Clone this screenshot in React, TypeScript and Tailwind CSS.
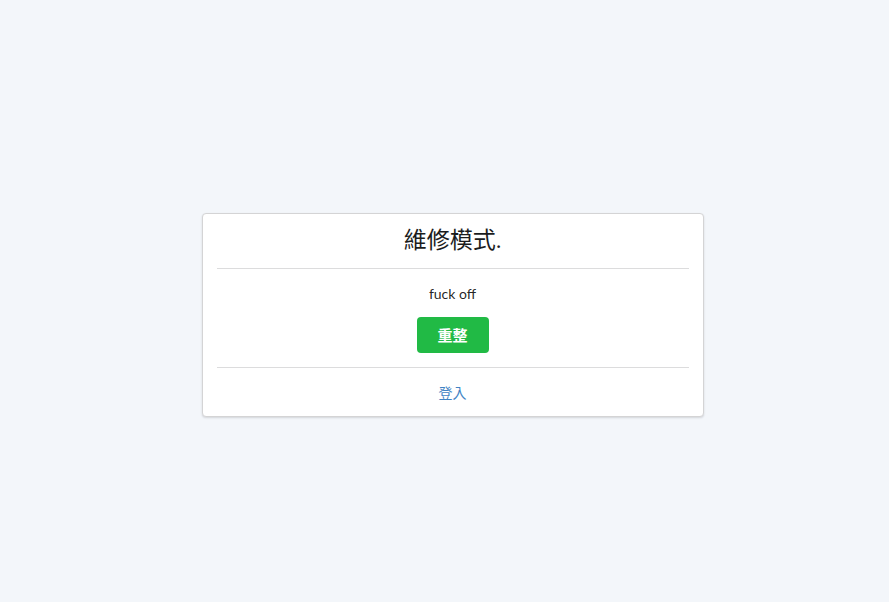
export default function App() {
  return (
    <div className="min-h-screen w-full bg-[#f3f6fa] flex items-center justify-center pl-[16px] pt-[28px] font-['Lato','Noto_Sans_CJK_TC',sans-serif] text-[14px] text-[rgba(0,0,0,0.87)]">
      <div className="w-[502px] bg-white border border-[#d4d4d5] rounded-[4px] shadow-[0_1px_2px_rgba(34,36,38,0.15)] px-[14px] pt-[12px] pb-[13px] flex flex-col items-center">
        <h1 className="h-[30px] leading-[30px] text-[23px] font-normal text-[#1b1c1d] font-['Liberation_Serif','Noto_Sans_CJK_TC',serif]">
          維修模式.
        </h1>
        <div className="w-full h-px bg-[#dcdcdd] mt-[12px] mb-[15px]" />
        <p className="h-[20px] leading-[20px]">fuck off</p>
        <button className="mt-[13px] w-[72px] h-[36px] rounded-[4px] bg-[#21ba45] text-white font-bold text-[15px] flex items-center justify-center">
          重整
        </button>
        <div className="w-full h-px bg-[#dcdcdd] mt-[14px] mb-[15px]" />
        <a href="#" className="h-[20px] leading-[20px] text-[#4183c4]">
          登入
        </a>
      </div>
    </div>
  );
}
